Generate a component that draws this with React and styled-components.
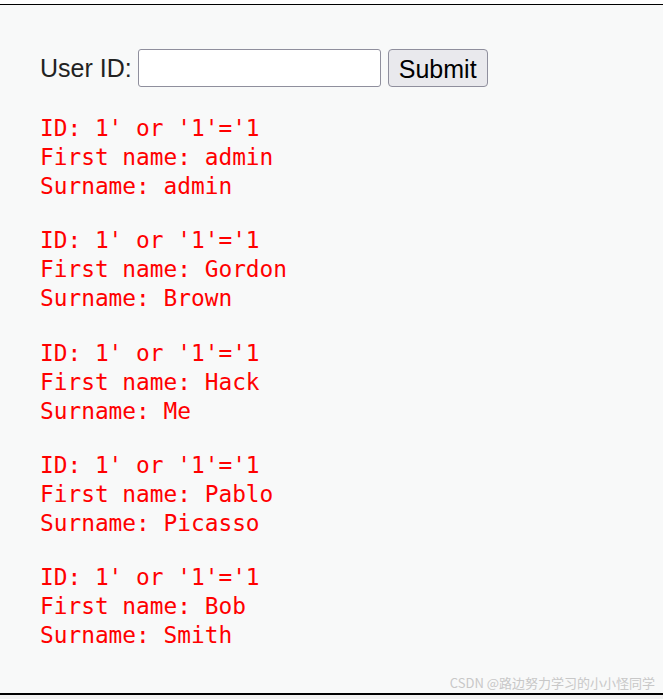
import React from "react";
import styled, { createGlobalStyle } from "styled-components";

const GlobalStyle = createGlobalStyle`
  html, body {
    margin: 0;
    padding: 0;
    background: #f1f1f1;
  }
`;

const TopStrip = styled.div`
  height: 4px;
  background: #ffffff;
`;

const Frame = styled.div`
  position: relative;
  box-sizing: border-box;
  height: 691px;
  border-top: 1px solid #000;
  border-bottom: 2px solid #000;
  background: #f8f9f9;
  padding: 44px 0 0 40px;
`;

const Form = styled.form`
  display: flex;
  align-items: center;
  gap: 7px;
  font-family: "Liberation Sans", Arial, sans-serif;
  font-size: 25px;
  color: #222;
`;

const Label = styled.label`
  margin-right: -1px;
`;

const Input = styled.input`
  box-sizing: border-box;
  width: 243px;
  height: 38px;
  border: 1px solid #8f8f9d;
  border-radius: 3px;
  background: #fff;
`;

const Button = styled.button`
  box-sizing: border-box;
  width: 100px;
  height: 38px;
  border: 1px solid #8f8f9d;
  border-radius: 4px;
  background: #e9e9ed;
  color: #000;
  font-family: "Liberation Sans", Arial, sans-serif;
  font-size: 25px;
  padding: 2px 0 0;
`;

const Results = styled.div`
  margin-top: 27px;
  display: flex;
  flex-direction: column;
  gap: 25.25px;
`;

const Record = styled.pre`
  margin: 0;
  color: #ff0000;
  font-family: "DejaVu Sans Mono", "Liberation Mono", monospace;
  font-size: 22.8px;
  line-height: 29px;
`;

const Watermark = styled.div`
  position: absolute;
  right: 8px;
  bottom: 1px;
  font-family: "Noto Sans CJK SC", "Liberation Sans", sans-serif;
  font-size: 13px;
  color: #c8c8c8;
`;

const rows = [
  ["admin", "admin"],
  ["Gordon", "Brown"],
  ["Hack", "Me"],
  ["Pablo", "Picasso"],
  ["Bob", "Smith"],
];

export default function App() {
  return (
    <>
      <GlobalStyle />
      <TopStrip />
      <Frame>
        <Form onSubmit={(e) => e.preventDefault()}>
          <Label>User ID:</Label>
          <Input type="text" />
          <Button type="submit">Submit</Button>
        </Form>
        <Results>
          {rows.map(([first, last]) => (
            <Record key={first}>
              {`ID: 1' or '1'='1\nFirst name: ${first}\nSurname: ${last}`}
            </Record>
          ))}
        </Results>
        <Watermark>CSDN @路边努力学习的小小怪同学</Watermark>
      </Frame>
    </>
  );
}
